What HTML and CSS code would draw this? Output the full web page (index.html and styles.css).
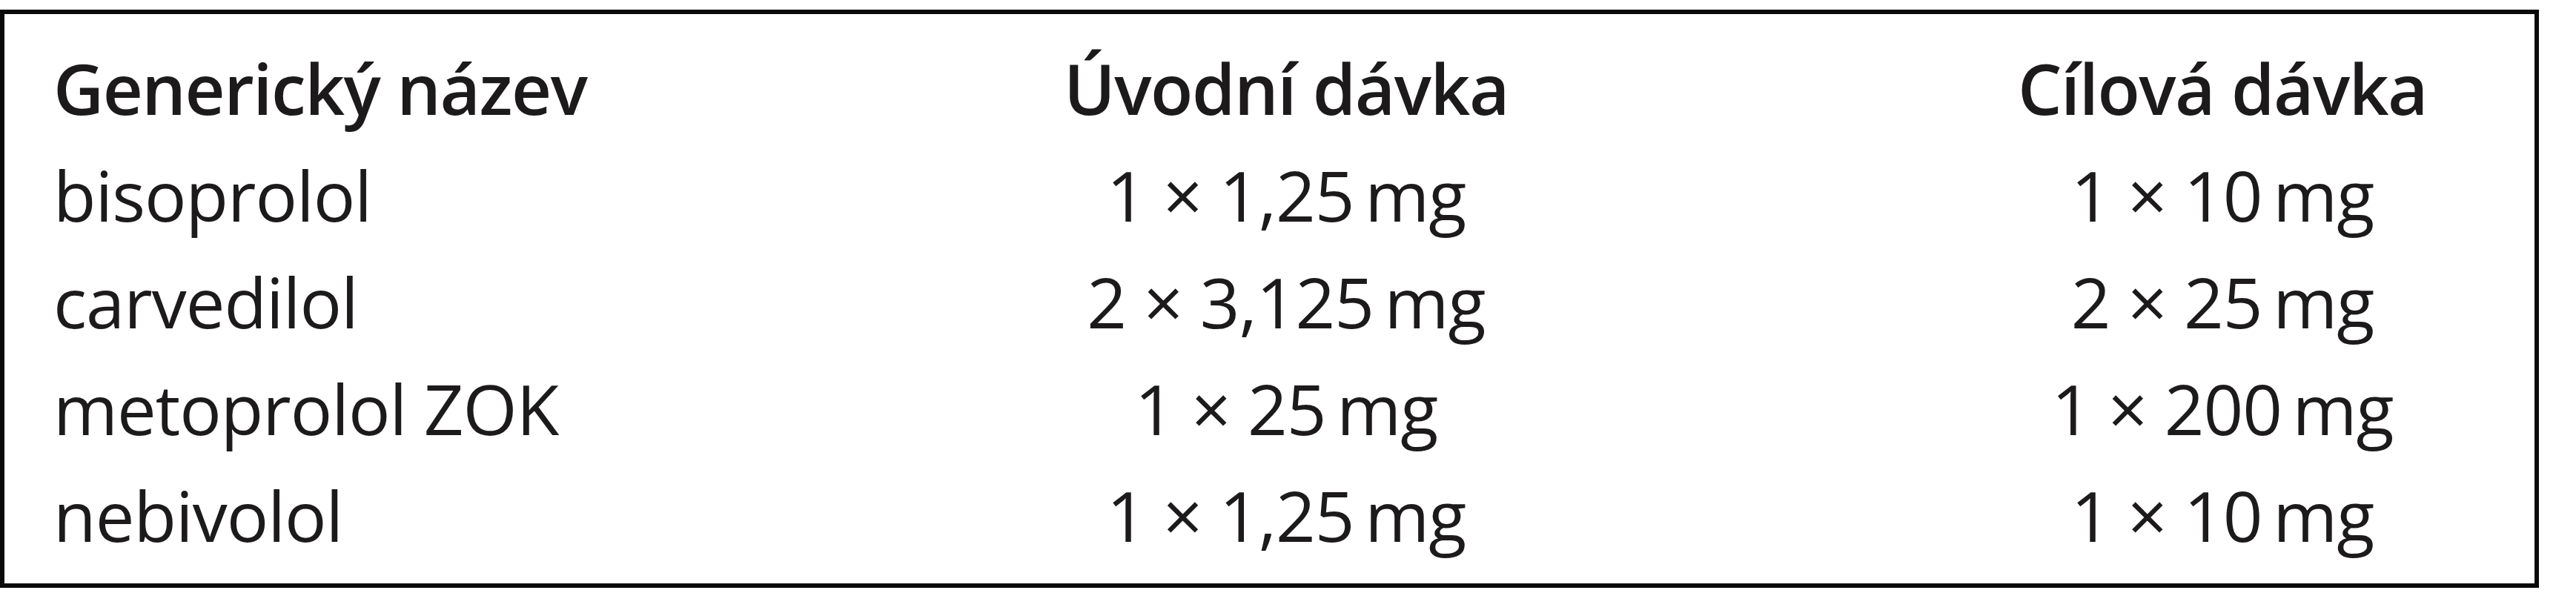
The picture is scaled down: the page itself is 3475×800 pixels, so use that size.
FILE: index.html
```html
<!DOCTYPE html>
<html lang="cs">
<head>
<meta charset="utf-8">
<title>Beta-blokátory</title>
<link rel="stylesheet" href="styles.css">
</head>
<body>
<div class="box">
  <div class="grid">
    <div class="cell head left">Generický název</div>
    <div class="cell head">Úvodní dávka</div>
    <div class="cell head">Cílová dávka</div>

    <div class="cell left">bisoprolol</div>
    <div class="cell">1 × 1,25&thinsp;mg</div>
    <div class="cell">1 × 10&thinsp;mg</div>

    <div class="cell left">carvedilol</div>
    <div class="cell">2 × 3,125&thinsp;mg</div>
    <div class="cell">2 × 25&thinsp;mg</div>

    <div class="cell left">metoprolol ZOK</div>
    <div class="cell">1 × 25&thinsp;mg</div>
    <div class="cell">1 × 200&thinsp;mg</div>

    <div class="cell left">nebivolol</div>
    <div class="cell">1 × 1,25&thinsp;mg</div>
    <div class="cell">1 × 10&thinsp;mg</div>
  </div>
</div>
</body>
</html>
```

FILE: styles.css
```css
html, body {
  margin: 0;
  padding: 0;
  background: #ffffff;
}

body {
  font-family: "Open Sans", "Noto Sans", sans-serif;
  color: #1c1a1b;
}

.box {
  margin-top: 13px;
  width: 3425px;
  height: 780px;
  box-sizing: border-box;
  border: 6px solid #0a0a0a;
  padding: 28px 0 0 66px;
}

.grid {
  display: grid;
  grid-template-columns: 700px 600px 600px;
  column-gap: 663px;
}

.cell {
  font-size: 94px;
  line-height: 144px;
  height: 144px;
  white-space: nowrap;
  text-align: center;
  letter-spacing: -1px;
}

.cell.left {
  text-align: left;
}

.head {
  font-weight: 600;
  letter-spacing: -1.5px;
}
```
